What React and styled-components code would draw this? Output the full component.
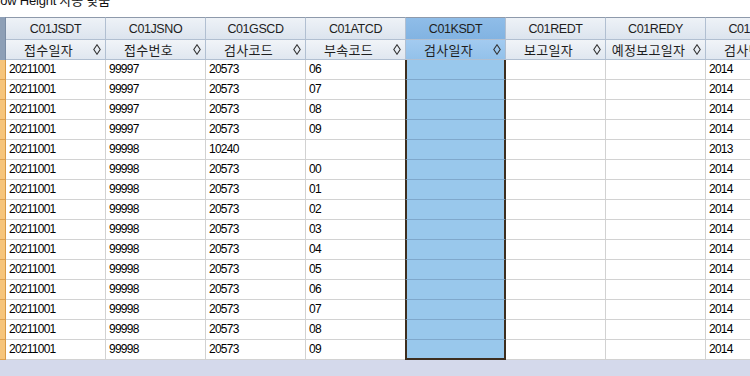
import React from "react";
import styled, { createGlobalStyle, css } from "styled-components";

const Global = createGlobalStyle`
  html, body { margin: 0; padding: 0; background: #fff; overflow: hidden; }
  body { font-family: "Liberation Sans", "Noto Sans CJK KR", sans-serif; }
`;

const Page = styled.div`
  width: 750px;
  height: 376px;
  overflow: hidden;
  display: flex;
  flex-direction: column;
  background: #d4d9eb;
`;

const TopBar = styled.div`
  height: 17px;
  flex: none;
  background: #fff;
  overflow: hidden;
`;

const TopLabel = styled.div`
  font-size: 13px;
  line-height: 13px;
  margin-top: -6px;
  margin-left: -9px;
  color: #111;
  white-space: nowrap;
  letter-spacing: -0.2px;
`;

const Grid = styled.div`
  display: flex;
  flex-direction: column;
  flex: none;
  width: 806px;
`;

const Row = styled.div`
  display: flex;
  height: ${(p) => p.$h}px;
`;

const Indicator = styled.div`
  width: 6px;
  flex: none;
  box-sizing: border-box;
  ${(p) =>
    p.$head
      ? css`
          background: #8d9fb6;
          border-right: 1px solid #7a8ca4;
        `
      : css`
          background: #f6c47a;
          border-right: 1px solid #d99a45;
          border-bottom: 1px solid #dfa04e;
        `}
`;

const HeadCell = styled.div`
  width: 100px;
  flex: none;
  box-sizing: border-box;
  display: flex;
  align-items: center;
  color: #1e1e1e;
  border-right: 1px solid #b1bfd1;
  border-bottom: 1px solid #b1bfd1;
  ${(p) => p.$top && css`border-top: 1px solid #8e9aab;`}
  background: ${(p) =>
    p.$sel
      ? p.$top
        ? "linear-gradient(#8fbde8, #82b3e2)"
        : "linear-gradient(#a3cbf0, #93c1ea)"
      : p.$top
      ? "linear-gradient(#eef2f7, #dce4ee)"
      : "linear-gradient(#f1f4f8, #e0e7f0)"};
  white-space: nowrap;
  overflow: hidden;
`;

const HeadText = styled.span`
  flex: 1;
  text-align: center;
  font-size: ${(p) => (p.$code ? "12.5px" : "13px")};
  letter-spacing: ${(p) => (p.$code ? "-0.4px" : "0.3px")};
`;

const SortIcon = styled.svg`
  flex: none;
  width: 8px;
  height: 11px;
  margin-right: 4px;
  margin-left: 2px;
`;

const DataCell = styled.div`
  width: 100px;
  flex: none;
  box-sizing: border-box;
  font-size: 12px;
  letter-spacing: -0.75px;
  line-height: 19px;
  padding-left: 3px;
  color: #000;
  white-space: nowrap;
  overflow: hidden;
  background: ${(p) => (p.$sel ? "#99c8ec" : "#fff")};
  border-right: 1px solid ${(p) => (p.$sel ? "#3d2e1f" : "#d2d2d2")};
  border-bottom: 1px solid ${(p) => (p.$sel ? "#7fa8cc" : "#d2d2d2")};
  ${(p) =>
    p.$sel &&
    css`
      border-left: 2px solid #3d2e1f;
      border-right: 2px solid #3d2e1f;
      margin-left: -1px;
      width: 101px;
    `}
  ${(p) =>
    p.$sel &&
    p.$last &&
    css`
      border-bottom: 2px solid #3d2e1f;
    `}
`;

const columns = [
  { code: "C01JSDT", name: "접수일자" },
  { code: "C01JSNO", name: "접수번호" },
  { code: "C01GSCD", name: "검사코드" },
  { code: "C01ATCD", name: "부속코드" },
  { code: "C01KSDT", name: "검사일자", sel: true },
  { code: "C01REDT", name: "보고일자" },
  { code: "C01REDY", name: "예정보고일자" },
  { code: "C01KSYR", name: "검사년도" },
];

const rows = [
  ["20211001", "99997", "20573", "06", "", "", "", "2014"],
  ["20211001", "99997", "20573", "07", "", "", "", "2014"],
  ["20211001", "99997", "20573", "08", "", "", "", "2014"],
  ["20211001", "99997", "20573", "09", "", "", "", "2014"],
  ["20211001", "99998", "10240", "", "", "", "", "2013"],
  ["20211001", "99998", "20573", "00", "", "", "", "2014"],
  ["20211001", "99998", "20573", "01", "", "", "", "2014"],
  ["20211001", "99998", "20573", "02", "", "", "", "2014"],
  ["20211001", "99998", "20573", "03", "", "", "", "2014"],
  ["20211001", "99998", "20573", "04", "", "", "", "2014"],
  ["20211001", "99998", "20573", "05", "", "", "", "2014"],
  ["20211001", "99998", "20573", "06", "", "", "", "2014"],
  ["20211001", "99998", "20573", "07", "", "", "", "2014"],
  ["20211001", "99998", "20573", "08", "", "", "", "2014"],
  ["20211001", "99998", "20573", "09", "", "", "", "2014"],
];

const Diamond = () => (
  <SortIcon viewBox="0 0 8 11">
    <path d="M4 0.8 L7.2 5.5 L4 10.2 L0.8 5.5 Z" fill="none" stroke="#333" strokeWidth="1.1" />
  </SortIcon>
);

export default function App() {
  return (
    <>
      <Global />
      <Page>
        <TopBar>
          <TopLabel>Row Height 자동 맞춤</TopLabel>
        </TopBar>
        <Grid>
          <Row $h={23}>
            <Indicator $head />
            {columns.map((c) => (
              <HeadCell key={c.code} $top $sel={c.sel}>
                <HeadText $code>{c.code}</HeadText>
              </HeadCell>
            ))}
          </Row>
          <Row $h={20}>
            <Indicator $head />
            {columns.map((c) => (
              <HeadCell key={c.code} $sel={c.sel}>
                <HeadText>{c.name}</HeadText>
                <Diamond />
              </HeadCell>
            ))}
          </Row>
          {rows.map((r, i) => (
            <Row $h={20} key={i}>
              <Indicator />
              {r.map((v, j) => (
                <DataCell
                  key={j}
                  $sel={columns[j].sel}
                  $last={i === rows.length - 1}
                >
                  {v}
                </DataCell>
              ))}
            </Row>
          ))}
        </Grid>
      </Page>
    </>
  );
}
